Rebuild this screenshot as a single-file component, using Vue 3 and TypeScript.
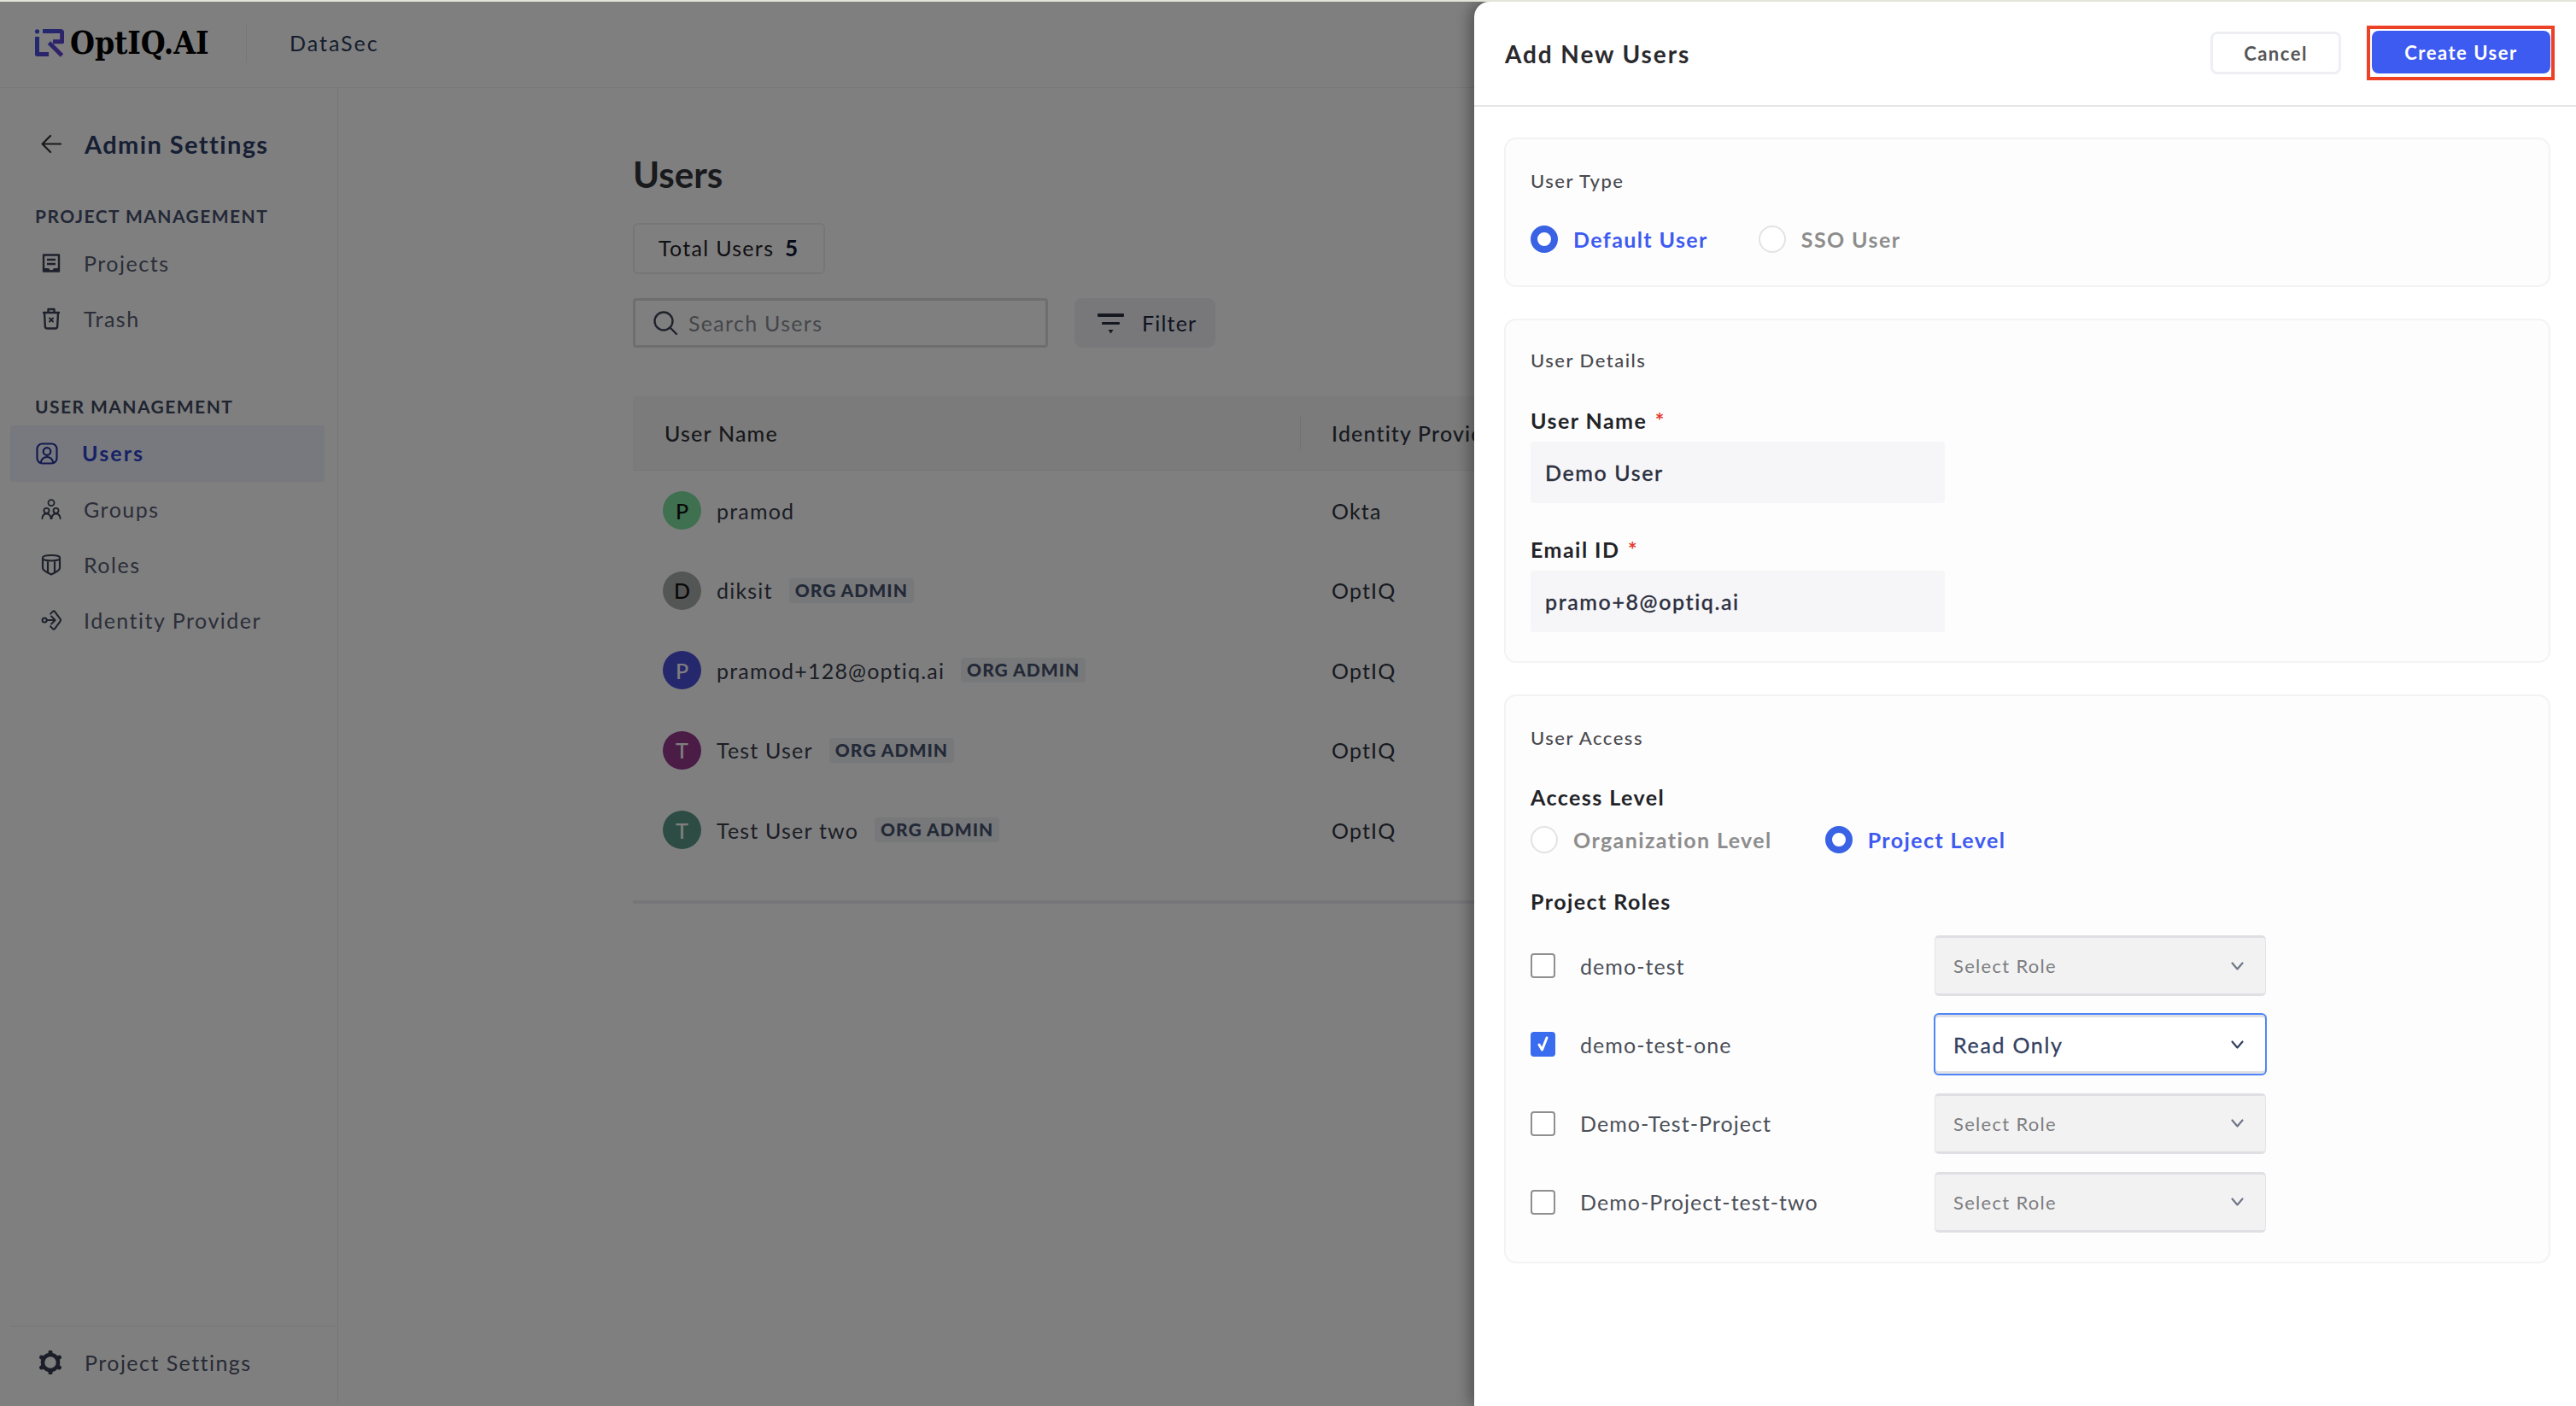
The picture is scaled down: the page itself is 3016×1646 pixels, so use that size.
<script setup lang="ts">
interface UserRow { name: string; initial: string; color: string; ink: string; admin: boolean; idp: string }
interface RoleRow { name: string; checked: boolean; value: string }

const users: UserRow[] = [
  { name: 'pramod', initial: 'P', color: '#7ee0a0', ink: '#111', admin: false, idp: 'Okta' },
  { name: 'diksit', initial: 'D', color: '#a6aca8', ink: '#111', admin: true, idp: 'OptIQ' },
  { name: 'pramod+128@optiq.ai', initial: 'P', color: '#4a50d8', ink: '#fff', admin: true, idp: 'OptIQ' },
  { name: 'Test User', initial: 'T', color: '#94388c', ink: '#fff', admin: true, idp: 'OptIQ' },
  { name: 'Test User two', initial: 'T', color: '#5a9a88', ink: '#fff', admin: true, idp: 'OptIQ' },
]

const roles: RoleRow[] = [
  { name: 'demo-test', checked: false, value: 'Select Role' },
  { name: 'demo-test-one', checked: true, value: 'Read Only' },
  { name: 'Demo-Test-Project', checked: false, value: 'Select Role' },
  { name: 'Demo-Project-test-two', checked: false, value: 'Select Role' },
]
</script>

<template>
  <div class="screen">
    <div class="strip"></div>
    <div class="page">
      <header class="topbar">
        <svg class="logo" viewBox="41 31 34 34" width="34" height="34" fill="none">
          <defs>
            <linearGradient id="lg" x1="41" y1="40" x2="75" y2="62" gradientUnits="userSpaceOnUse">
              <stop offset="0" stop-color="#3f55e0" />
              <stop offset="1" stop-color="#6a3fd0" />
            </linearGradient>
          </defs>
          <circle cx="43.5" cy="33.8" r="2.6" fill="url(#lg)" />
          <path d="M43.5 40v20.6H57M50 33.6h20.5q2.2 0 2.2 2.2V45.8H62M57.5 47L72.5 62" stroke="url(#lg)" stroke-width="5" stroke-linejoin="round" />
        </svg>
        <span class="logo-text">OptIQ.AI</span>
        <span class="top-divider"></span>
        <span class="product">DataSec</span>
      </header>

      <div class="body">
        <aside class="sidebar">
          <div class="back">
            <svg class="ico-slot" width="24" height="24" viewBox="0 0 24 24" fill="none" stroke="#333" stroke-width="2.2" stroke-linecap="round" stroke-linejoin="round"><path d="M23 12.5H2M11 3L1.6 12.5 11 22" /></svg>
            <span class="back-text">Admin Settings</span>
          </div>

          <div class="section first">PROJECT MANAGEMENT</div>
          <div class="nav">
            <svg class="ico-slot" width="24" height="24" viewBox="0 0 24 24" fill="none" stroke="#3d4356" stroke-width="2.4"><path d="M3 2.5h18v19H3z" stroke-linejoin="round" /><path d="M7 8h10M7 13h10" /><path d="M3 18h6l1.5 2h3l1.500-2h6v3.500H3z" fill="#3d4356" stroke="none" /></svg>
            <span>Projects</span>
          </div>
          <div class="nav">
            <svg class="ico-slot" width="24" height="26" viewBox="0 0 24 26" fill="none" stroke="#3d4356" stroke-width="2.4" stroke-linecap="round" stroke-linejoin="round"><path d="M3 6h18M8.500 5V2h7v3M4 6l.8 16q0 2.500 2.500 2.500h9.400q2.500 0 2.500-2.500L20 6" /><path d="M10 12.500l4 4M14 12.500l-4 4" stroke-width="2" /></svg>
            <span>Trash</span>
          </div>

          <div class="section second">USER MANAGEMENT</div>
          <div class="nav active">
            <svg width="26" height="26" viewBox="0 0 26 26" fill="none" stroke="#26349c" stroke-width="2.200" stroke-linecap="round"><rect x="1.500" y="1.500" width="23" height="23" rx="6" /><circle cx="13" cy="10.500" r="4.300" /><path d="M5.500 24q1.500-7 7.500-7t7.500 7" /></svg>
            <span>Users</span>
          </div>
          <div class="nav up">
            <svg class="ico-slot" width="26" height="26" viewBox="0 0 26 26" fill="none" stroke="#3d4356" stroke-width="2" stroke-linecap="round"><circle cx="13" cy="5" r="3.800" /><circle cx="7" cy="15" r="3.300" /><circle cx="19" cy="15" r="3.300" /><path d="M1.500 25q.5-6 5.500-6t5.500 6M13.500 25q.5-6 5.500-6t5.500 6" /></svg>
            <span>Groups</span>
          </div>
          <div class="nav up">
            <svg class="ico-slot" width="24" height="26" viewBox="0 0 24 26" fill="none" stroke="#3d4356" stroke-width="2.200" stroke-linejoin="round"><path d="M2 5q0-3 10-3t10 3v12q0 3-10 7.500Q2 20 2 17z" /><path d="M2 7q10 3 20 0M8 9v13M16 9v13" /></svg>
            <span>Roles</span>
          </div>
          <div class="nav up">
            <svg class="ico-slot" width="26" height="26" viewBox="0 0 26 26" fill="none" stroke="#3d4356" stroke-width="2.200" stroke-linecap="round" stroke-linejoin="round"><circle cx="4.500" cy="13" r="2.800" /><path d="M7.500 13h10M13 8l5 5-5 5" /><path d="M12 5l3-3q1.200-1 2.400 0l7 9.600q1 1.400 0 2.800l-7 9.600q-1.200 1-2.400 0l-3-3" /></svg>
            <span>Identity Provider</span>
          </div>

          <div class="side-foot">
            <svg class="ico-slot" width="28" height="28" viewBox="0 0 28 28" fill="none" stroke="#363c50" stroke-width="4.500"><circle cx="14" cy="14" r="9" /><g stroke-width="5" stroke-linecap="round"><path d="M14 2v1M14 25v1M3.600 8l.9.5M23.500 19.500l.9.5M3.600 20l.9-.5M23.500 8.500l.9-.5" /></g></svg>
            <span>Project Settings</span>
          </div>
        </aside>

        <main class="main">
          <h1 class="title">Users</h1>
          <div class="total">Total Users <b>5</b></div>
          <div class="tools">
            <div class="search">
              <svg width="30" height="30" viewBox="0 0 30 30" fill="none" stroke="#3f4658" stroke-width="2.400" stroke-linecap="round"><circle cx="13" cy="13" r="10.500" /><path d="M21 21l7 7" /></svg>
              <span>Search Users</span>
            </div>
            <div class="filter">
              <svg width="32" height="26" viewBox="0 0 32 26" fill="#2a3040"><rect x="0" y="2" width="31" height="4" rx="1" /><rect x="5" y="12" width="21" height="3" rx="1" /><path d="M12.500 21h6l-3 4.500z" /></svg>
              <span>Filter</span>
            </div>
          </div>

          <div class="thead">
            <div class="c1">User Name</div>
            <div class="c2">Identity Provider</div>
          </div>
          <div v-for="u in users" :key="u.name" class="trow">
            <div class="c1 cell-user">
              <span class="avatar" :style="{ background: u.color, color: u.ink }">{{ u.initial }}</span>
              <span class="uname">{{ u.name }}</span>
              <span v-if="u.admin" class="badge">ORG ADMIN</span>
            </div>
            <div class="c2">{{ u.idp }}</div>
          </div>
          <div class="tfoot"></div>
        </main>
      </div>

      <div class="overlay"></div>

      <section class="drawer">
        <div class="d-head">
          <h2 class="d-title">Add New Users</h2>
          <button class="btn-cancel">Cancel</button>
          <span class="highlight"><button class="btn-create">Create User</button></span>
        </div>

        <div class="d-body">
          <div class="card card-type">
            <div class="card-label">User Type</div>
            <div class="radios type-radios">
              <label class="radio on"><i></i>Default User</label>
              <label class="radio"><i></i>SSO User</label>
            </div>
          </div>

          <div class="card card-details">
            <div class="card-label">User Details</div>
            <div class="field-label fl-name">User Name <em>*</em></div>
            <div class="input">Demo User</div>
            <div class="field-label fl-email">Email ID <em>*</em></div>
            <div class="input">pramo+8@optiq.ai</div>
          </div>

          <div class="card card-access">
            <div class="card-label">User Access</div>
            <div class="field-label fl-access">Access Level</div>
            <div class="radios access-radios">
              <label class="radio"><i></i>Organization Level</label>
              <label class="radio on"><i></i>Project Level</label>
            </div>
            <div class="field-label fl-roles">Project Roles</div>
            <div v-for="r in roles" :key="r.name" class="role">
              <span class="check" :class="{ checked: r.checked }">
                <svg v-if="r.checked" width="19" height="21" viewBox="0 0 19 21" fill="none" stroke="#fff" stroke-width="3" stroke-linecap="round" stroke-linejoin="round"><path d="M5 11l3.500 6L14 3" /></svg>
              </span>
              <span class="role-name">{{ r.name }}</span>
              <div class="select" :class="{ chosen: r.checked }">
                <span>{{ r.value }}</span>
                <svg width="15" height="10" viewBox="0 0 15 10" fill="none" :stroke="r.checked ? '#34405e' : '#6f7686'" stroke-width="2.200" stroke-linecap="round" stroke-linejoin="round"><path d="M1.500 1.500l6 7 6-7" /></svg>
              </div>
            </div>
          </div>
        </div>
      </section>
    </div>
  </div>
</template>

<style>
html, body { margin: 0; background: #fff; }
</style>

<style scoped>
.screen {
  width: 3016px;
  height: 1646px;
  overflow: hidden;
  font-family: Lato, "Noto Sans", sans-serif;
  color: #3a4258;
  background: #fff;
}
.strip { height: 2px; background: #e3e4d8; }
.page { position: relative; height: 1644px; overflow: hidden; }
.overlay { position: absolute; inset: 0; background: rgba(0, 0, 0, 0.5); }

.topbar {
  height: 100px;
  border-bottom: 1px solid #f0f0f0;
  display: flex;
  align-items: center;
  padding-left: 41px;
  box-sizing: content-box;
}
.logo { flex: none; margin-top: -3px; }
.logo-text {
  font-family: "DejaVu Serif Condensed", "DejaVu Serif", serif;
  font-weight: 700;
  font-size: 37px;
  color: #000;
  margin-left: 7px;
  width: 206px;
  letter-spacing: -0.1px;
  margin-top: -4px;
}
.top-divider { width: 1px; height: 44px; background: #eee; margin-right: 50px; margin-top: -3px; }
.product { font-size: 25px; letter-spacing: 2px; color: #2b3c5c; margin-top: -4px; }

.body { display: flex; height: 1541px; }
.sidebar {
  width: 395px;
  flex: none;
  border-right: 1px solid #efefef;
  padding-top: 40px;
  display: flex;
  flex-direction: column;
}
.back { height: 50px; display: flex; align-items: center; padding-left: 48px; }
.back-text {
  margin-left: 27px;
  font-size: 29px;
  font-weight: 700;
  letter-spacing: 1.4px;
  color: #2e3f68;
}
.section {
  height: 30px;
  line-height: 30px;
  padding-left: 41px;
  font-size: 21px;
  font-weight: 700;
  letter-spacing: 1.45px;
  color: #47516f;
}
.section.first { margin-top: 45px; margin-bottom: 7px; }
.section.second { margin-top: 56px; margin-bottom: 7px; color: #3e4860; }
.nav {
  height: 65px;
  display: flex;
  align-items: center;
  padding-left: 36px;
  margin-left: 12px;
  width: 368px;
  box-sizing: border-box;
  font-size: 25px;
  letter-spacing: 1.5px;
  color: #565c72;
}
.ico-slot { flex: none; width: 24px; }
.nav span { margin-left: 26px; }
.nav .ico-slot { margin-left: 0; }
.nav.up > * { margin-bottom: 2px; }
.nav.active {
  height: 66px;
  padding-left: 30px;
  background: #f0f2fe;
  color: #2f45cc;
  font-weight: 700;
  letter-spacing: 2.1px;
  border-radius: 2px;
}
.nav.active span { margin-left: 28px; margin-bottom: 2px; }
.side-foot {
  margin-top: auto;
  margin-left: 12px;
  height: 92px;
  box-sizing: border-box;
  padding-bottom: 8px;
  border-top: 1px solid #ececec;
  display: flex;
  align-items: center;
  padding-left: 33px;
  font-size: 25px;
  letter-spacing: 1.45px;
  color: #4f566c;
}
.side-foot span { margin-left: 26px; }
.side-foot .ico-slot { width: 28px; }

.main { flex: 1; padding-left: 345px; min-width: 0; }
.title {
  margin: 71px 0 0;
  height: 60px;
  line-height: 60px;
  font-size: 42px;
  font-weight: 700;
  color: #33343a;
}
.total {
  margin-top: 27px;
  width: 225px;
  height: 60px;
  line-height: 55px;
  box-sizing: border-box;
  border: 2px solid #ececee;
  border-radius: 6px;
  padding-left: 28px;
  font-size: 25px;
  letter-spacing: 1.3px;
  color: #1f2128;
}
.total b { color: #0c1433; margin-left: 5px; font-size: 26px; }
.tools { margin-top: 28px; display: flex; gap: 31px; }
.search {
  width: 486px;
  height: 58px;
  box-sizing: border-box;
  border: 3px solid #dcdcdc;
  border-radius: 4px;
  display: flex;
  align-items: center;
  padding-left: 20px;
  gap: 12px;
  font-size: 25px;
  letter-spacing: 1.3px;
  color: #8a8d96;
}
.filter {
  width: 165px;
  height: 58px;
  box-sizing: border-box;
  background: #f0f1f5;
  border-radius: 9px;
  display: flex;
  align-items: center;
  padding-left: 27px;
  gap: 20px;
  font-size: 25px;
  letter-spacing: 1.2px;
  color: #1c2743;
}
.thead {
  margin-top: 57px;
  height: 87px;
  box-sizing: border-box;
  background: #f6f6f6;
  border-bottom: 1px solid #ececec;
  display: flex;
  align-items: center;
  font-size: 25px;
  letter-spacing: 1.2px;
  color: #303338;
  font-weight: 500;
}
.c1 { width: 782px; box-sizing: border-box; padding-left: 37px; flex: none; }
.c2 { padding-left: 36px; font-size: 25px; letter-spacing: 1.15px; color: #2f3440; }
.thead .c1 { height: 42px; line-height: 42px; border-right: 1px solid #e4e4e4; }
.trow { height: 93.5px; display: flex; align-items: center; }
.cell-user { display: flex; align-items: center; padding-left: 35px; }
.avatar {
  width: 45px;
  height: 45px;
  border-radius: 50%;
  display: flex;
  align-items: center;
  justify-content: center;
  font-size: 25px;
  font-weight: 500;
  flex: none;
}
.uname { margin-left: 18px; font-size: 25px; letter-spacing: 1.2px; color: #383d4c; }
.badge {
  margin-left: 19px;
  height: 29px;
  line-height: 27px;
  padding: 0 7px;
  border-radius: 4px;
  background: #eef0f5;
  font-size: 21px;
  font-weight: 900;
  letter-spacing: 1px;
  color: #46526f;
}
.tfoot { margin-top: 35px; height: 4px; background: #ecedf3; }

.drawer {
  position: absolute;
  top: 0;
  right: 0;
  bottom: 0;
  width: 1290px;
  background: #fff;
  border-top-left-radius: 18px;
  box-shadow: -6px 0 16px rgba(0, 0, 0, 0.32);
}
.d-head {
  border-bottom: 2px solid #e6e6e6;
  display: flex;
  align-items: center;
  padding-left: 36px;
  padding-bottom: 1px;
  box-sizing: border-box;
  height: 123px;
}
.d-title {
  margin: 2px auto 0 0;
  font-size: 28px;
  font-weight: 700;
  letter-spacing: 1.9px;
  color: #2a2a2e;
}
button { font-family: inherit; cursor: pointer; }
.btn-cancel {
  width: 153px;
  height: 50px;
  box-sizing: border-box;
  background: #fff;
  border: 3px solid #eeeff3;
  border-radius: 8px;
  font-size: 22px;
  font-weight: 700;
  letter-spacing: 1.5px;
  color: #565656;
}
.highlight {
  margin-left: 30px;
  margin-right: 25px;
  width: 220px;
  height: 64px;
  box-sizing: border-box;
  border: 4px solid #ec4126;
  padding: 2px 0 0 2px;
}
.btn-create {
  display: block;
  width: 209px;
  height: 50px;
  border: 0;
  border-radius: 8px;
  background: #3d5af1;
  color: #fff;
  font-size: 22px;
  font-weight: 700;
  letter-spacing: 1.5px;
}
.d-body { padding: 36px 30px 0 35px; display: flex; flex-direction: column; gap: 37px; }
.card {
  border: 2px solid #f3f3f5;
  border-radius: 14px;
  background: #fdfdfd;
  box-sizing: border-box;
  padding-left: 29px;
}
.card-type { height: 175px; }
.card-details { height: 403px; }
.card-access { height: 666px; }
.card-label {
  margin-top: 34px;
  height: 30px;
  line-height: 30px;
  font-size: 22px;
  font-weight: 500;
  letter-spacing: 1.5px;
  color: #4a4a4e;
}
.card-details .card-label { margin-top: 32px; }
.radios { display: flex; }
.type-radios { margin-top: 36px; gap: 59px; }
.access-radios { margin-top: 18px; gap: 62px; }
.radio {
  display: flex;
  align-items: center;
  gap: 18px;
  height: 34px;
  font-size: 25px;
  font-weight: 700;
  letter-spacing: 1.4px;
  color: #8d8d8d;
}
.radio i {
  width: 32px;
  height: 32px;
  box-sizing: border-box;
  border-radius: 50%;
  border: 2px solid #e3e3e3;
  background: #fff;
  flex: none;
}
.radio.on { color: #3d5af1; }
.radio.on i { border: 8px solid #3a62e4; }
.field-label {
  height: 30px;
  line-height: 30px;
  font-size: 25px;
  font-weight: 700;
  letter-spacing: 1.45px;
  color: #222327;
}
.field-label em { color: #e5392a; font-style: normal; margin-left: 2px; }
.fl-name { margin-top: 40px; margin-bottom: 10px; }
.fl-email { margin-top: 39px; margin-bottom: 10px; }
.fl-access { margin-top: 39px; }
.fl-roles { margin-top: 40px; margin-bottom: 25px; }
.input {
  width: 485px;
  height: 72px;
  line-height: 72px;
  background: #f6f6f8;
  border-radius: 4px;
  padding-left: 17px;
  box-sizing: border-box;
  font-size: 25px;
  font-weight: 500;
  letter-spacing: 1.6px;
  color: #2c3040;
  -webkit-text-stroke: 0.3px currentColor;
}
.role {
  height: 71px;
  margin-bottom: 21.300px;
  display: flex;
  align-items: center;
}
.check {
  width: 29px;
  height: 29px;
  box-sizing: border-box;
  border: 2px solid #8f8f8f;
  border-radius: 4px;
  background: #fff;
  flex: none;
  display: flex;
  align-items: center;
  justify-content: center;
}
.check.checked { border-color: #3a6cf0; background: #3a6cf0; }
.role-name {
  margin-left: 29px;
  width: 415px;
  font-size: 25px;
  letter-spacing: 1.05px;
  color: #4b4f58;
}
.select {
  width: 388px;
  height: 71px;
  box-sizing: border-box;
  background: #f2f2f3;
  border: 1px solid #e6e6ea;
  border-top: 3px solid #dfdfe4;
  border-bottom: 3px solid #dfdfe4;
  border-radius: 5px;
  padding: 0 25px 0 21px;
  display: flex;
  align-items: center;
  justify-content: space-between;
  font-size: 22px;
  letter-spacing: 1.3px;
  color: #7d7d80;
}
.select.chosen {
  background: #fff;
  width: 390px;
  height: 73px;
  margin: -1px 0 -1px -1px;
  border: 2px solid #4f86f7;
  border-radius: 6px;
  box-shadow: inset 0 3px 0 #dfdfe4, inset 0 -3px 0 #dfdfe4;
  font-size: 25px;
  letter-spacing: 1.7px;
  color: #33405f;
  -webkit-text-stroke: 0.3px currentColor;
}
</style>
